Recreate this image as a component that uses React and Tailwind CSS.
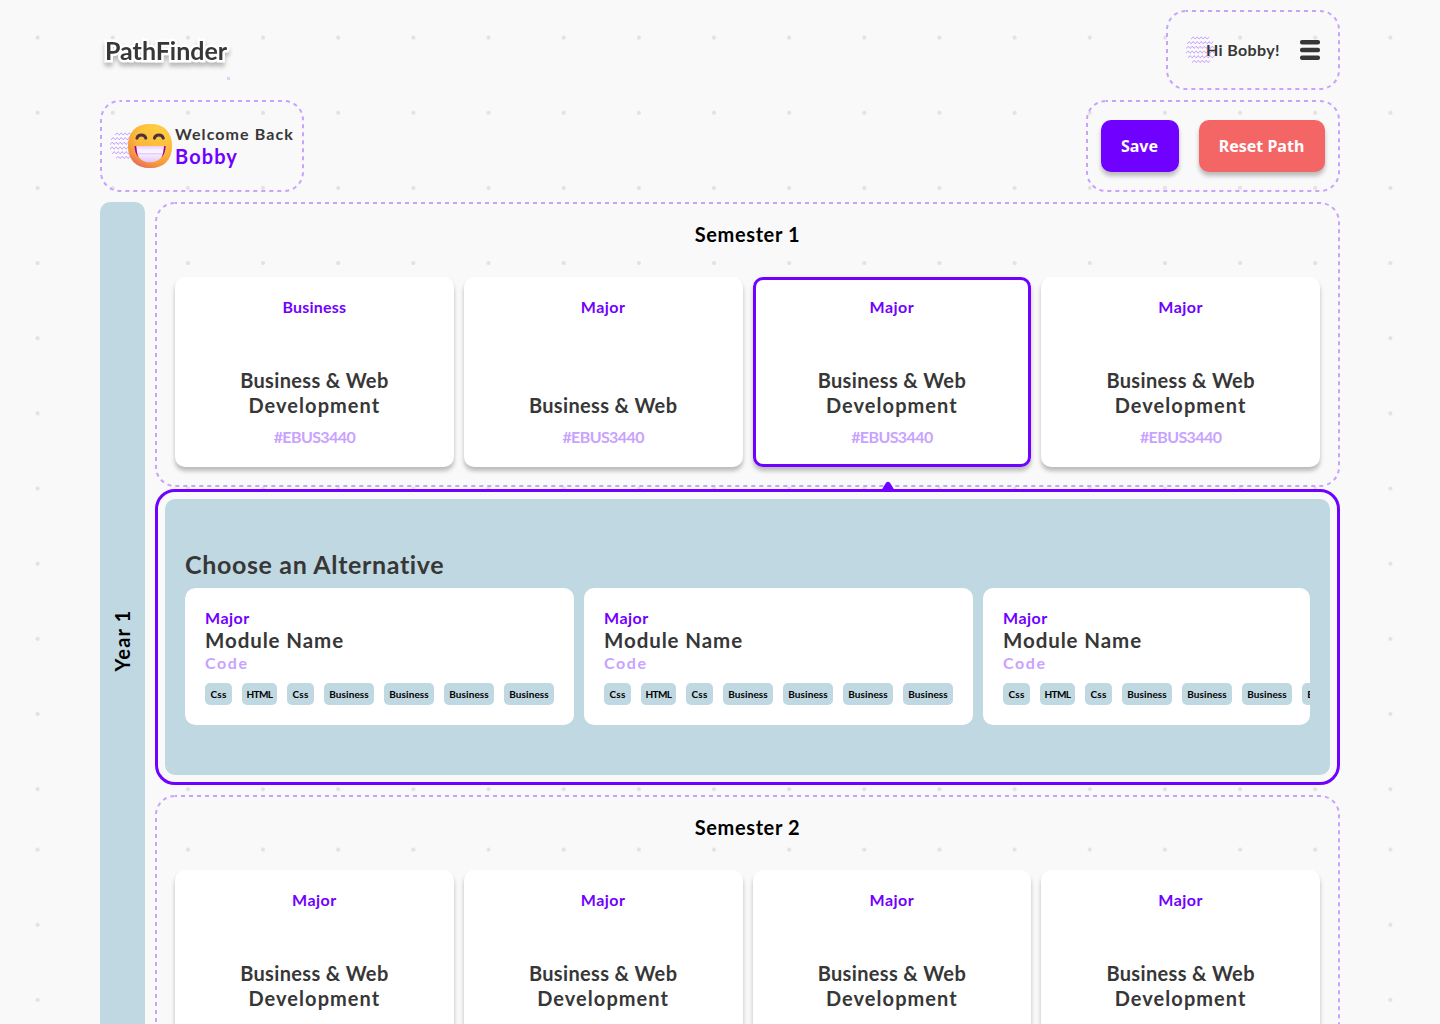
import React from "react";

const WAVES = [
  [5, 24, 2],
  [1, 28, 6.7],
  [0, 28, 11.4],
  [0, 28, 16.1],
  [2, 28, 20.8],
  [6, 24, 25.5],
];

function wavePath([from, to, y]) {
  let d = `M${from} ${y + 1}`;
  let up = true;
  for (let x = from; x + 2 <= to + 0.5; x += 2) {
    d += `q1 ${up ? -0.3 : 0.3} 2 ${up ? -2.1 : 2.1}`;
    up = !up;
  }
  return d;
}

function Waves() {
  return (
    <svg width="29" height="28" viewBox="0 0 29 28" fill="none" stroke="#c8a2ff" strokeWidth="1" className="shrink-0">
      {WAVES.map((w) => (
        <path key={w[2]} d={wavePath(w)} />
      ))}
    </svg>
  );
}

function Emoji() {
  return (
    <svg width="44" height="44" viewBox="0 0 44 44" className="relative -ml-[11px] shrink-0">
      <defs>
        <linearGradient id="face" x1="0.75" y1="0.1" x2="0.3" y2="1">
          <stop offset="0" stopColor="#ffd043" />
          <stop offset="0.5" stopColor="#fbb038" />
          <stop offset="0.8" stopColor="#f58f3c" />
          <stop offset="1" stopColor="#e0567c" />
        </linearGradient>
        <radialGradient id="glow" cx="0.55" cy="0.42" r="0.58">
          <stop offset="0.6" stopColor="#ffc83d" stopOpacity="0.35" />
          <stop offset="1" stopColor="#f08a3c" stopOpacity="0.35" />
        </radialGradient>
        <linearGradient id="teeth" x1="0" y1="0" x2="0" y2="1">
          <stop offset="0" stopColor="#e6ccf7" />
          <stop offset="0.25" stopColor="#faf0ff" />
          <stop offset="0.42" stopColor="#fbf4ff" />
          <stop offset="0.48" stopColor="#dcbdf0" />
          <stop offset="0.54" stopColor="#f6ebff" />
          <stop offset="1" stopColor="#e3c6f8" />
        </linearGradient>
      </defs>
      <path d="M22 0C36 0 44 8 44 22S36 44 22 44 0 36 0 22 8 0 22 0Z" fill="url(#face)" />
      <path d="M22 0C36 0 44 8 44 22S36 44 22 44 0 36 0 22 8 0 22 0Z" fill="url(#glow)" />
      <path d="M8.900 14.200C10.200 10 16.500 10 17.800 14.200M26.400 14.200C27.700 10 34 10 35.300 14.200" fill="none" stroke="#4a3040" strokeWidth="2.900" strokeLinecap="round" />
      <path d="M6.500 22H37.700C37.600 26 36.500 30 34.500 32.500H9.700C7.700 30 6.600 26 6.500 22Z" fill="#a3009f" />
      <path d="M8.200 22H36.100L34.900 29.700C33.500 35 28.500 38.300 22 38.300S10.700 35 9.300 29.700Z" fill="url(#teeth)" />
    </svg>
  );
}

function DashedFrame() {
  return (
    <svg className="pointer-events-none absolute inset-0 size-full" fill="none">
      <rect x="1" y="1" rx="19" className="h-[calc(100%-2px)] w-[calc(100%-2px)]" stroke="#c8a2ff" strokeWidth="2" strokeDasharray="4 4" strokeDashoffset="2" />
    </svg>
  );
}

const CARD_SHADOW = "shadow-[0_4px_4px_rgba(0,0,0,0.25)]";

function Card({ tag = "Major", title = ["Business & Web", "Development"], code, selected }) {
  return (
    <div className={`flex h-[190px] flex-col items-center rounded-[10px] bg-white ${CARD_SHADOW} ${selected ? "border-[3px] border-[#7000ff] pt-[17px]" : "pt-5"}`}>
      <div className={`text-[16px] leading-[20px] text-[#7000ff] ${tag === "Major" ? "tracking-[0.5px]" : "tracking-[0.2px]"}`}>{tag}</div>
      <div className="mt-[51px] flex h-[50px] flex-col justify-end text-center text-[20px] leading-[25px] text-[#373737]">
        {title.map((t, i) => (
          <div key={t} className={i === 1 ? "tracking-[1.05px]" : "tracking-[0.35px]"}>{t}</div>
        ))}
      </div>
      {code && <div className="mt-[9px] text-[16px] leading-[20px] tracking-[-0.6px] text-[#c8a2ff]">{code}</div>}
    </div>
  );
}

function Semester({ name, children }) {
  return (
    <section className="relative h-[285px] px-5 pt-5">
      <DashedFrame />
      <h2 className="text-center text-[20px] leading-[25px] tracking-[0.6px] text-black">{name}</h2>
      <div className="mt-[30px] grid grid-cols-4 gap-[10px]">{children}</div>
    </section>
  );
}

const TAGS = ["Css", "HTML", "Css", "Business", "Business", "Business", "Business"];
const TAG_STYLE = {
  Css: "w-[27px] tracking-[0.2px]",
  HTML: "w-[35px] tracking-[-0.6px]",
  Business: "w-[50px] tracking-[0.1px]",
};

function Alternative() {
  return (
    <div className="h-[137px] w-[389px] shrink-0 rounded-[10px] bg-white pl-5 pt-5">
      <div className="text-[16px] leading-[20px] tracking-[0.5px] text-[#7000ff]">Major</div>
      <div className="text-[20.500px] leading-[25px] tracking-[0.9px] text-[#373737]">Module Name</div>
      <div className="text-[16px] leading-[20px] tracking-[1.6px] text-[#c8a2ff]">Code</div>
      <div className="mt-[10px] flex gap-[10px]">
        {TAGS.map((t, i) => (
          <div key={i} className={`h-[22px] shrink-0 rounded-[5px] bg-[#c0d8e1] text-center text-[10px] leading-[23px] text-black ${TAG_STYLE[t]}`}>
            {t}
          </div>
        ))}
      </div>
    </div>
  );
}

const DOTS = "bg-[radial-gradient(circle_at_37.600px_37.600px,#e2e2e2_1.600px,transparent_2.300px)] bg-[length:75.170px_75.170px]";

export default function App() {
  return (
    <div className="relative h-[1024px] w-[1440px] overflow-hidden bg-[#f9f9f9] font-['Lato',sans-serif] font-bold">
      <div className="absolute inset-0">
        <div className={`h-[812px] ${DOTS}`} />
        <div className={`h-[212px] ${DOTS}`} />
      </div>
      <div className="relative px-[100px] pt-[10px]">
        <header className="flex h-[80px] items-center justify-between">
          <div className="ml-[5px] flex">
            <h1 className="w-[122px] whitespace-nowrap text-[25px] leading-[30px] text-[#373737] [-webkit-text-stroke:5px_white] [paint-order:stroke_fill] drop-shadow-[0_4px_2px_rgba(0,0,0,0.25)]">PathFinder</h1>
            <span className="relative top-[42px] size-[3px] bg-[#dcd6f5]" />
          </div>
          <nav className="relative flex h-[80px] w-[174px] items-center pl-5">
            <DashedFrame />
            <Waves />
            <span className="relative -ml-[9px] w-[94px] whitespace-nowrap text-[16px] leading-[20px] tracking-[0.35px] text-[#373737]">Hi Bobby!</span>
            <svg width="20" height="20" viewBox="0 0 20 20" fill="#373737">
              <rect width="20" height="4.600" rx="2" />
              <rect y="7.700" width="20" height="4.600" rx="2" />
              <rect y="15.400" width="20" height="4.600" rx="2" />
            </svg>
          </nav>
        </header>
        <div className="mt-[10px] flex justify-between">
          <div className="relative flex h-[92px] w-[204px] items-center pl-[10px]">
            <DashedFrame />
            <Waves />
            <Emoji />
            <div className="ml-[3px] whitespace-nowrap">
              <div className="text-[16px] leading-[20px] tracking-[1.1px] text-[#373737]">Welcome Back</div>
              <div className="text-[20px] leading-[25px] tracking-[1.1px] text-[#7000ff]">Bobby</div>
            </div>
          </div>
          <div className="relative flex h-[92px] w-[254px] items-center gap-5 pl-[15px] font-['Noto_Sans',sans-serif]">
            <DashedFrame />
            <button className={`h-[52px] w-[78px] rounded-[10px] bg-[#7000ff] pr-px text-[16px] text-white ${CARD_SHADOW}`}>Save</button>
            <button className={`h-[52px] w-[126px] rounded-[10px] bg-[#f46666] pr-px text-[16px] text-white ${CARD_SHADOW}`}>Reset Path</button>
          </div>
        </div>
        <main className="mt-[10px] flex gap-[10px]">
          <aside className="flex h-[880px] w-[45px] items-center justify-center rounded-[10px] bg-[#c0d8e1] pb-[3px]">
            <div className="-rotate-90 whitespace-nowrap text-[20px] leading-[25px] tracking-[1.2px] text-black">Year 1</div>
          </aside>
          <div className="w-[1185px]">
            <Semester name="Semester 1">
              <Card tag="Business" code="#EBUS3440" />
              <Card title={["Business & Web"]} code="#EBUS3440" />
              <Card selected code="#EBUS3440" />
              <Card code="#EBUS3440" />
            </Semester>
            <section className="relative mt-[2px] h-[296px] rounded-[20px] border-[3px] border-[#7000ff] p-[7px]">
              <svg className="absolute -top-[11px] left-[723px]" width="14" height="10" viewBox="0 0 14 10" fill="#7000ff">
                <path d="M0 10L5 1.800Q7 -0.400 9 1.800L14 10Z" />
              </svg>
              <div className="h-full rounded-[10px] bg-[#c0d8e1] px-5 pt-[50px]">
                <h2 className="text-[25px] leading-[31px] tracking-[0.65px] text-[#373737]">Choose an Alternative</h2>
                <div className="mt-[8px] flex gap-[10px] overflow-hidden rounded-[10px]">
                  <Alternative />
                  <Alternative />
                  <Alternative />
                </div>
              </div>
            </section>
            <div className="mt-[10px]">
              <Semester name="Semester 2">
                <Card />
                <Card />
                <Card />
                <Card />
              </Semester>
            </div>
          </div>
        </main>
      </div>
    </div>
  );
}
